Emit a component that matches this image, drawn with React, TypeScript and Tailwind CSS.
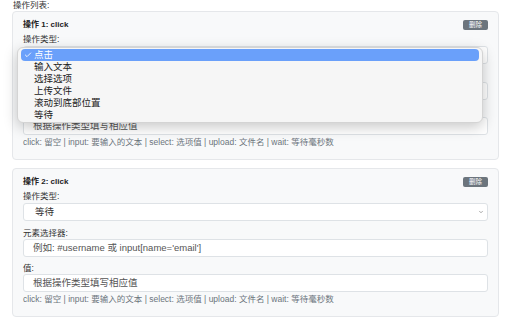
import { Check, ChevronDown } from 'lucide-react';

const FONT = { fontFamily: '"Liberation Sans", "Noto Sans CJK SC", sans-serif' };

const OPTIONS = ['点击', '输入文本', '选择选项', '上传文件', '滚动到底部位置', '等待'];

function SelectPopup() {
  return (
    <div className="absolute left-[-6px] top-[1px] z-10 w-[466px] h-[76px] rounded-[6px] border border-[#d4d4d4] bg-[#f6f6f6] shadow-[0_4px_14px_rgba(0,0,0,0.22)] px-[3px] py-[1px]">
      {OPTIONS.map((opt, i) => (
        <div
          key={opt}
          className={`flex items-center h-[12px] rounded-[4px] text-[9.5px] leading-[12px] ${
            i === 0 ? 'bg-[#6aa0fa] text-white' : 'text-[#222]'
          }`}
        >
          <span className="w-[13px] flex justify-center">
            {i === 0 && <Check size={8} strokeWidth={2.5} />}
          </span>
          {opt}
        </div>
      ))}
    </div>
  );
}

function ActionCard({ index, selected, open }: { index: number; selected: string; open?: boolean }) {
  return (
    <div className="border border-[#e5e7ea] rounded-[4px] bg-[#f8f9fa] px-[10px] pt-[7px] pb-[12px]">
      <div className="flex items-center justify-between h-[11px]">
        <span className="text-[8px] font-semibold text-[#222]">操作 {index}: click</span>
        <span className="bg-[#6c757d] text-white text-[6.5px] leading-[10px] h-[10px] px-[6px] rounded-[2px]">删除</span>
      </div>
      <div className="mt-[4px] h-[10px] text-[8.5px] leading-[10px] text-[#333]">操作类型:</div>
      <div className="relative mt-[2px]">
        <div className="flex items-center justify-between h-[18px] bg-white border border-[#dee2e6] rounded-[3px] pl-[11px] pr-[3px] text-[9.5px] text-[#333]">
          <span>{selected}</span>
          <ChevronDown size={6} strokeWidth={2} className="text-[#555]" />
        </div>
        {open && <SelectPopup />}
      </div>
      <div className="mt-[7px] h-[10px] text-[8.5px] leading-[10px] text-[#333]">元素选择器:</div>
      <div className="mt-[1px] flex items-center h-[18px] bg-white border border-[#dee2e6] rounded-[3px] pl-[9px] text-[9.5px] text-[#555]">
        例如: #username 或 input[name='email']
      </div>
      <div className="mt-[6px] h-[10px] text-[8.5px] leading-[10px] text-[#333]">值:</div>
      <div className="mt-[1px] flex items-center h-[18px] bg-white border border-[#dee2e6] rounded-[3px] pl-[9px] text-[9.5px] text-[#555]">
        根据操作类型填写相应值
      </div>
      <div className="mt-[2px] h-[10px] text-[8.5px] leading-[10px] text-[#6c757d] whitespace-nowrap">
        click: 留空 | input: 要输入的文本 | select: 选项值 | upload: 文件名 | wait: 等待毫秒数
      </div>
    </div>
  );
}

export default function App() {
  return (
    <div className="w-[512px] h-[320px] bg-white overflow-hidden pl-[12px] pr-[13px]" style={FONT}>
      <div className="h-[11px] pl-[1px] text-[8.5px] leading-[10px] text-[#333]">操作列表:</div>
      <div className="flex flex-col gap-[8px]">
        <ActionCard index={1} selected="点击" open />
        <ActionCard index={2} selected="等待" />
      </div>
    </div>
  );
}
